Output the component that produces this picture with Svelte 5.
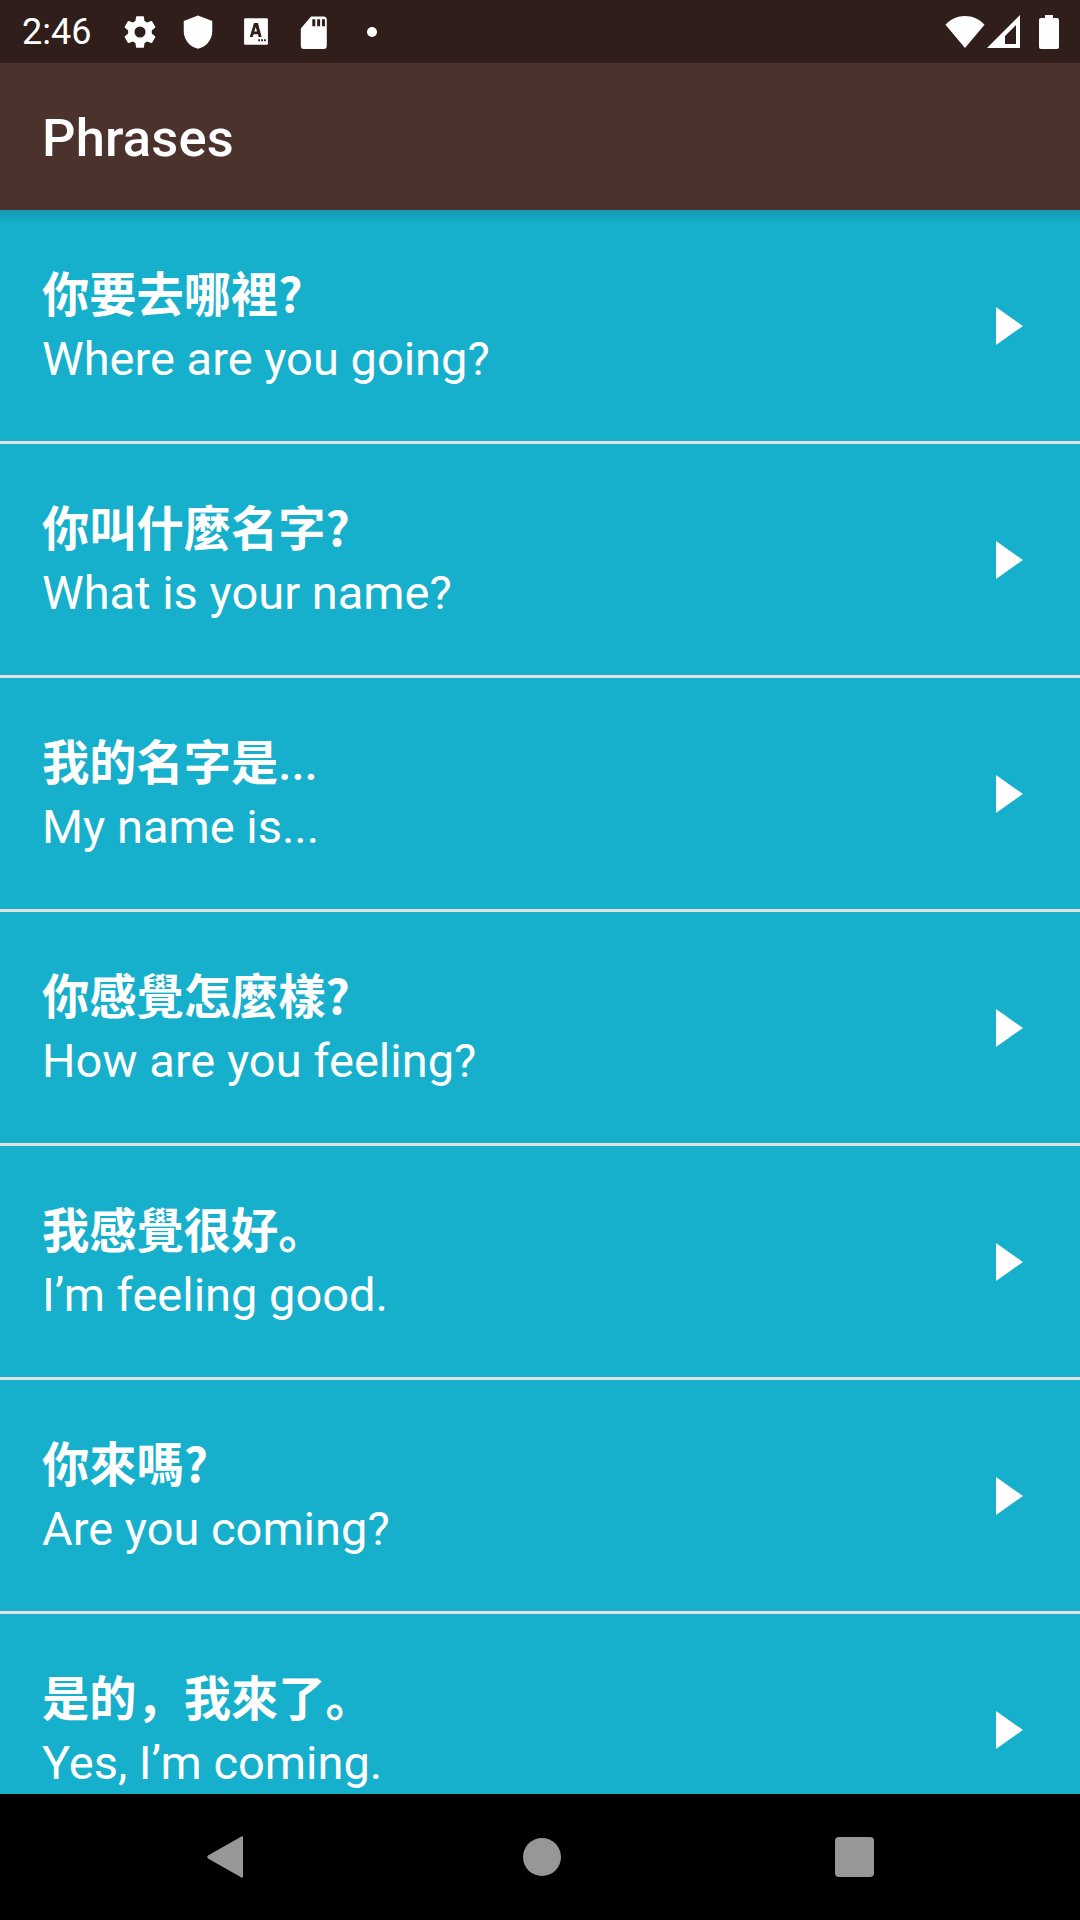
<script>
  const phrases = [
    { zh: '你要去哪裡?', en: 'Where are you going?' },
    { zh: '你叫什麼名字?', en: 'What is your name?' },
    { zh: '我的名字是', dots: '...', en: 'My name is...' },
    { zh: '你感覺怎麼樣?', en: 'How are you feeling?' },
    { zh: '我感覺很好。', en: 'I’m feeling good.' },
    { zh: '你來嗎?', en: 'Are you coming?' },
    { zh: '是的\uFF0C我來了。', en: 'Yes, I’m coming.' }
  ];
</script>

<div class="screen">
  <div class="status">
    <span class="time">2:46</span>
    <svg class="ic gear" viewBox="0 0 24 24"><path d="M19.4 13c.04-.32.1-.66.1-1s-.06-.68-.1-1l2.1-1.65c.2-.15.25-.42.12-.64l-2-3.46c-.12-.22-.39-.3-.61-.22l-2.49 1c-.52-.4-1.08-.73-1.69-.98l-.38-2.65A.49.49 0 0 0 14 2h-4c-.25 0-.46.18-.49.42l-.38 2.65c-.61.25-1.17.59-1.69.98l-2.49-1c-.23-.09-.49 0-.61.22l-2 3.46c-.13.22-.07.49.12.64L4.56 11c-.04.32-.07.66-.07 1s.03.68.07 1l-2.11 1.65c-.19.15-.25.42-.12.64l2 3.46c.12.22.39.3.61.22l2.49-1c.52.4 1.08.73 1.69.98l.38 2.65c.03.24.24.42.49.42h4c.25 0 .46-.18.49-.42l.38-2.65c.61-.25 1.17-.59 1.69-.98l2.49 1c.23.09.49 0 .61-.22l2-3.46c.12-.22.07-.49-.12-.64L19.4 13zM12 15.5a3.500 3.500 0 1 1 0-7 3.500 3.500 0 0 1 0 7z" /></svg>
    <svg class="ic shield" viewBox="0 0 24 24"><path d="M12 1.500 3 5v6.500c0 5.400 3.800 10 9 11 5.200-1 9-5.600 9-11V5z" /></svg>
    <svg class="ic auto" viewBox="0 0 24 24" preserveAspectRatio="none">
      <path fill-rule="evenodd" d="M2 1h20a1 1 0 0 1 1 1v20a1 1 0 0 1-1 1H2a1 1 0 0 1-1-1V2a1 1 0 0 1 1-1zM10.200 5 6.200 16.500h2.700l.8-2.300h4l.8 2.300h2.700L13.800 5zM11.700 8.200l1.300 3.800h-2.600zM14 18.500v1.500h1.700v-1.500zM16.700 18.500v1.500h1.700v-1.500zM19.400 18.500v1.500h1.700v-1.500z" />
    </svg>
    <svg class="ic sd" viewBox="0 0 24 24" preserveAspectRatio="none">
      <path fill-rule="evenodd" d="M10 1h10.500A2.500 2.500 0 0 1 23 3.500v18a2.500 2.500 0 0 1-2.500 2.500H4a2.500 2.500 0 0 1-2.500-2.500V9.500zM11 3v5h2.500V3zM15 3v5h2.500V3zM19 3v5h2.500V3z" />
    </svg>
    <span class="dot"></span>
    <span class="spacer"></span>
    <svg class="wifi" viewBox="0 0 40 32" preserveAspectRatio="none"><path d="M20 32 .5 9.500C5.500 4 12.500 1 20 1s14.500 3 19.500 8.500z" /></svg>
    <svg class="signal" viewBox="0 0 33 33"><path fill-rule="evenodd" d="M33 0v33H0zM29 10 18 21v8h11z" /></svg>
    <svg class="battery" viewBox="0 0 20 34"><path d="M6 0h8v3h4a2 2 0 0 1 2 2v27a2 2 0 0 1-2 2H2a2 2 0 0 1-2-2V5a2 2 0 0 1 2-2h4z" /></svg>
  </div>

  <header class="bar">Phrases</header>

  <main class="list">
    {#each phrases as p}
      <div class="row">
        <div class="texts">
          <div class="zh">{p.zh}{#if p.dots}<span class="dots">{p.dots}</span>{/if}</div>
          <div class="en">{p.en}</div>
        </div>
        <svg class="play" viewBox="0 0 30 40"><path d="M1 1 28 20 1 39z" /></svg>
      </div>
    {/each}
    <div class="shadow"></div>
  </main>

  <nav class="nav">
    <svg class="back" viewBox="0 0 38 42"><path d="M36 1.500V40.500c0 1-1 1.500-2 .8L1 22.500c-1-.8-1-2.200 0-3L34 .7c1-.7 2-.2 2 .8z" /></svg>
    <span class="home"></span>
    <span class="recent"></span>
  </nav>
</div>

<style>
  :global(body) {
    margin: 0;
    background: #000;
  }

  .screen {
    width: 1080px;
    height: 1920px;
    display: flex;
    flex-direction: column;
    font-family: Roboto, "Noto Sans CJK SC", sans-serif;
    color: #fff;
    overflow: hidden;
  }

  .status {
    height: 63px;
    flex-shrink: 0;
    background: #301e1b;
    display: flex;
    align-items: center;
    padding: 0 21px 0 22px;
    box-sizing: border-box;
  }

  .time {
    font-size: 36px;
    width: 99px;
  }

  .ic {
    width: 38px;
    height: 38px;
    fill: #fff;
  }

  .shield { margin-left: 20px; }
  .auto { width: 26px; height: 29px; margin-left: 26px; }
  .sd { width: 29px; height: 34px; margin-left: 30px; }

  .dot {
    width: 10px;
    height: 10px;
    border-radius: 50%;
    background: #fff;
    margin-left: 39px;
  }

  .spacer { flex: 1; }

  .wifi { width: 40px; height: 33px; fill: #fff; }
  .signal { width: 33px; height: 33px; margin-left: 2px; fill: #fff; }
  .battery { width: 20px; height: 34px; margin-left: 19px; fill: #fff; }

  .bar {
    height: 147px;
    flex-shrink: 0;
    box-sizing: border-box;
    background: #4c322d;
    display: flex;
    align-items: center;
    padding: 3px 0 0 42px;
    font-size: 52.5px;
    font-weight: 500;
    letter-spacing: 0.15px;
  }

  .list {
    flex: 1;
    min-height: 0;
    background: #16afcc;
    overflow: hidden;
    position: relative;
  }

  .shadow {
    position: absolute;
    top: 0;
    left: 0;
    right: 0;
    height: 14px;
    background: linear-gradient(rgba(0, 0, 0, 0.12), rgba(0, 0, 0, 0));
  }

  .row {
    height: 234px;
    box-sizing: border-box;
    border-bottom: 3px solid #e0e0e0;
    display: flex;
    align-items: center;
    justify-content: space-between;
    padding: 0 55px 0 42px;
  }

  .texts { padding-top: 2px; }

  .zh {
    font-family: "Noto Sans CJK SC", Roboto, sans-serif;
    font-size: 47.25px;
    font-weight: 700;
    line-height: 64px;
    height: 64px;
    margin-top: -3px;
    margin-bottom: 3px;
  }

  .dots {
    font-family: Roboto, sans-serif;
    font-weight: 500;
  }

  .en {
    font-size: 47px;
    line-height: 64px;
  }

  .play {
    width: 30px;
    height: 40px;
    fill: #fff;
    filter: blur(0.5px);
  }

  .nav {
    height: 126px;
    flex-shrink: 0;
    background: #000;
    display: flex;
    align-items: center;
  }

  .back {
    width: 38px;
    height: 42px;
    fill: #979797;
    margin-left: 207px;
  }

  .home {
    width: 38px;
    height: 38px;
    border-radius: 50%;
    background: #979797;
    margin-left: 278px;
  }

  .recent {
    width: 39px;
    height: 40px;
    border-radius: 4px;
    background: #979797;
    margin-left: 274px;
  }
</style>
